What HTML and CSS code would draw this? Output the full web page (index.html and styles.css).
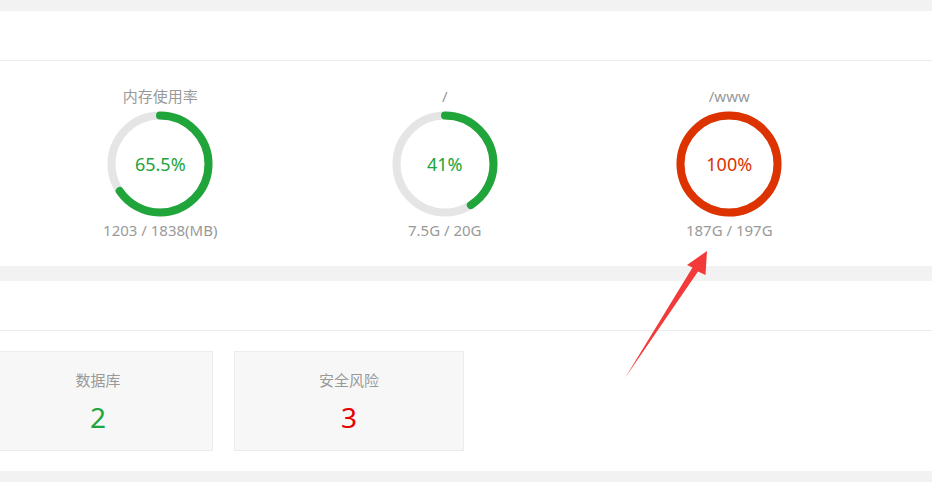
FILE: index.html
```html
<!DOCTYPE html>
<html lang="zh-CN">
<head>
  <meta charset="UTF-8" />
  <title>面板首页</title>
  <link rel="stylesheet" href="styles.css">
</head>
<body>
  <div class="panel">
    <div class="panel-head"></div>
    <div class="gauges">
      <div class="gauge">
        <div class="gauge-title">内存使用率</div>
        <div class="ring">
          <svg width="106" height="106">
            <circle class="ring-bg" cx="53" cy="53" r="48.5" />
            <circle class="ring-bar" cx="53" cy="53" r="48.5" stroke-dasharray="199.6 304.7" />
          </svg>
          <div class="ring-text">65.5%</div>
        </div>
        <div class="gauge-info">1203 / 1838(MB)</div>
      </div>
      <div class="gauge">
        <div class="gauge-title">/</div>
        <div class="ring">
          <svg width="106" height="106">
            <circle class="ring-bg" cx="53" cy="53" r="48.5" />
            <circle class="ring-bar" cx="53" cy="53" r="48.5" stroke-dasharray="124.9 304.7" />
          </svg>
          <div class="ring-text">41%</div>
        </div>
        <div class="gauge-info">7.5G / 20G</div>
      </div>
      <div class="gauge">
        <div class="gauge-title">/www</div>
        <div class="ring full">
          <svg width="106" height="106">
            <circle class="ring-bg" cx="53" cy="53" r="48.5" />
            <circle class="ring-bar" cx="53" cy="53" r="48.5" stroke-dasharray="304.7 304.7" />
          </svg>
          <div class="ring-text">100%</div>
        </div>
        <div class="gauge-info">187G / 197G</div>
      </div>
    </div>
  </div>

  <div class="panel">
    <div class="panel-head"></div>
    <div class="cards">
      <div class="card">
        <div class="card-label">数据库</div>
        <div class="card-value">2</div>
      </div>
      <div class="card">
        <div class="card-label">安全风险</div>
        <div class="card-value danger">3</div>
      </div>
    </div>
  </div>

  <svg class="arrow" width="932" height="482" viewBox="0 0 932 482">
    <polygon points="625,378 692.5,267.5 687,265 707,251 705.5,275 698,271.5" />
  </svg>
</body>
</html>
```

FILE: styles.css
```css
body {
  margin: 0;
  padding-top: 11px;
  background: #f2f2f2;
  font-family: "Noto Sans", "Noto Sans CJK SC", sans-serif;
  color: #999;
  overflow: hidden;
  height: 482px;
  box-sizing: border-box;
}

.panel {
  background: #fff;
  margin-bottom: 15px;
}

.panel-head {
  height: 49px;
  border-bottom: 1px solid #ebebeb;
}

.gauges {
  display: flex;
  padding: 25px 0 26px 18px;
}

.gauge {
  width: 284.5px;
  display: flex;
  flex-direction: column;
  align-items: center;
}

.gauge-title {
  font-size: 15px;
  line-height: 20px;
}

.ring {
  position: relative;
  width: 106px;
  height: 106px;
  margin-top: 5px;
}
.ring circle {
  fill: none;
  stroke-width: 8;
}
.ring-bg {
  stroke: #e5e5e5;
}
.ring-bar {
  stroke: #20a53a;
  stroke-linecap: round;
  transform: rotate(-90deg);
  transform-origin: 50% 50%;
}
.ring-text {
  position: absolute;
  top: 50%;
  left: 50%;
  transform: translate(-50%, -50%);
  font-size: 18px;
  color: #20a53a;
}

.ring.full .ring-bar { stroke: #dd3300; }
.ring.full .ring-text { color: #dd3300; }

.gauge-info {
  margin-top: 3px;
  font-size: 15px;
  line-height: 20px;
}

.cards {
  display: flex;
  gap: 21px;
  margin-left: -17px;
  padding: 20px 0;
}

.card {
  width: 228px;
  height: 98px;
  background: #f7f7f7;
  border: 1px solid #ececec;
  text-align: center;
}

.card-label {
  margin-top: 18px;
  font-size: 15px;
  line-height: 20px;
}

.card-value {
  margin-top: 10px;
  font-size: 28px;
  line-height: 34px;
  color: #20a53a;
}
.card-value.danger { color: #e60000; }

.arrow {
  position: absolute;
  top: 0;
  left: 0;
}
.arrow polygon {
  fill: #f23a3a;
}
```
